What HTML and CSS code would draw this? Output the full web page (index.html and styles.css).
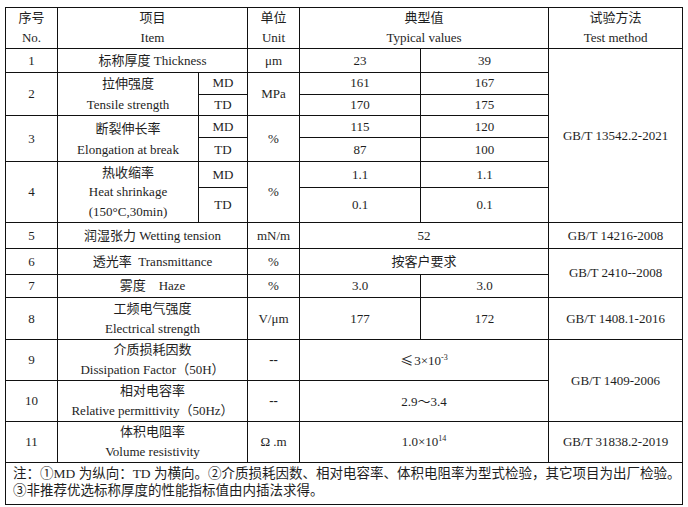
FILE: index.html
```html
<!DOCTYPE html>
<html lang="zh-CN">
<head>
<meta charset="utf-8">
<title>典型值</title>
<link rel="stylesheet" href="styles.css">
</head>
<body>
<table class="spec">
  <colgroup>
    <col class="c-no">
    <col class="c-item">
    <col class="c-dir">
    <col class="c-unit">
    <col class="c-v1">
    <col class="c-v2">
    <col class="c-test">
  </colgroup>
  <tbody>
    <tr class="r-head">
      <td>序号<br>No.</td>
      <td colspan="2">项目<br>Item</td>
      <td>单位<br>Unit</td>
      <td colspan="2">典型值<br>Typical values</td>
      <td>试验方法<br>Test method</td>
    </tr>
    <tr class="r1">
      <td>1</td>
      <td colspan="2">标称厚度 Thickness</td>
      <td>μm</td>
      <td>23</td>
      <td>39</td>
      <td rowspan="7">GB/T 13542.2-2021</td>
    </tr>
    <tr class="r2a">
      <td rowspan="2">2</td>
      <td rowspan="2" class="two">拉伸强度<br>Tensile strength</td>
      <td>MD</td>
      <td rowspan="2">MPa</td>
      <td>161</td>
      <td>167</td>
    </tr>
    <tr class="r2b">
      <td>TD</td>
      <td>170</td>
      <td>175</td>
    </tr>
    <tr class="r3a">
      <td rowspan="2">3</td>
      <td rowspan="2" class="two">断裂伸长率<br>Elongation at break</td>
      <td>MD</td>
      <td rowspan="2">%</td>
      <td>115</td>
      <td>120</td>
    </tr>
    <tr class="r3b">
      <td>TD</td>
      <td>87</td>
      <td>100</td>
    </tr>
    <tr class="r4a">
      <td rowspan="2">4</td>
      <td rowspan="2" class="three">热收缩率<br>Heat shrinkage<br>(150°C,30min)</td>
      <td>MD</td>
      <td rowspan="2">%</td>
      <td>1.1</td>
      <td>1.1</td>
    </tr>
    <tr class="r4b">
      <td>TD</td>
      <td>0.1</td>
      <td>0.1</td>
    </tr>
    <tr class="r5">
      <td>5</td>
      <td colspan="2">润湿张力 Wetting tension</td>
      <td>mN/m</td>
      <td colspan="2">52</td>
      <td>GB/T 14216-2008</td>
    </tr>
    <tr class="r6">
      <td>6</td>
      <td colspan="2">透光率&nbsp; Transmittance</td>
      <td>%</td>
      <td colspan="2">按客户要求</td>
      <td rowspan="2">GB/T 2410--2008</td>
    </tr>
    <tr class="r7">
      <td>7</td>
      <td colspan="2">雾度&nbsp;&nbsp;&nbsp; Haze</td>
      <td>%</td>
      <td>3.0</td>
      <td>3.0</td>
    </tr>
    <tr class="r8">
      <td>8</td>
      <td colspan="2">工频电气强度<br>Electrical strength</td>
      <td>V/μm</td>
      <td>177</td>
      <td>172</td>
      <td>GB/T 1408.1-2016</td>
    </tr>
    <tr class="r9">
      <td>9</td>
      <td colspan="2">介质损耗因数<br>Dissipation Factor（50H）</td>
      <td class="dash">--</td>
      <td colspan="2"><span class="le">≤</span>3×10<sup>-3</sup></td>
      <td rowspan="2">GB/T 1409-2006</td>
    </tr>
    <tr class="r10">
      <td>10</td>
      <td colspan="2">相对电容率<br>Relative permittivity（50Hz）</td>
      <td class="dash">--</td>
      <td colspan="2">2.9<span class="tilde">～</span>3.4</td>
    </tr>
    <tr class="r11">
      <td>11</td>
      <td colspan="2">体积电阻率<br>Volume resistivity</td>
      <td>Ω .m</td>
      <td colspan="2">1.0×10<sup>14</sup></td>
      <td>GB/T 31838.2-2019</td>
    </tr>
    <tr class="r-note">
      <td colspan="7" class="note">注：①MD 为纵向：TD 为横向。②介质损耗因数、相对电容率、体积电阻率为型式检验，其它项目为出厂检验。<br>③非推荐优选标称厚度的性能指标值由内插法求得。</td>
    </tr>
  </tbody>
</table>
</body>
</html>
```

FILE: styles.css
```css
html, body {
  background: #ffffff;
}
body {
  margin: 0;
  padding: 7px 0 0 5px;
  font-family: "Liberation Serif", "Noto Sans CJK SC", serif;
  font-size: 13px;
  color: #1e1e1e;
}
.spec {
  border-collapse: collapse;
  table-layout: fixed;
  width: 677px;
}
.spec td {
  border: 1px solid #111;
  padding: 0 2px;
  text-align: center;
  vertical-align: middle;
  line-height: 20px;
  white-space: nowrap;
}
.c-no { width: 52px; }
.c-item { width: 141px; }
.c-dir { width: 49px; }
.c-unit { width: 52px; }
.c-v1 { width: 121px; }
.c-v2 { width: 128px; }
.c-test { width: 134px; }

.r-head { height: 41px; }
.r1 { height: 24px; }
.r2a { height: 21px; }
.r2b { height: 21px; }
.r3a { height: 22px; }
.r3b { height: 24px; }
.r4a { height: 26px; }
.r4b { height: 35px; }
.r5 { height: 26px; }
.r6 { height: 26px; }
.r7 { height: 23px; }
.r8 { height: 42px; }
.r9 { height: 41px; }
.r10 { height: 41px; }
.r11 { height: 41px; }
.r-note { height: 42px; }

.spec td.two { line-height: 21px; }
.spec td.three { line-height: 19.5px; }
.spec td.dash { font-weight: bold; }
.spec sup {
  font-size: 8px;
  line-height: 0;
  vertical-align: 5px;
}
.le {
  font-family: "Noto Sans CJK SC", sans-serif;
  margin-right: 1px;
}
.tilde {
  font-family: "Noto Sans CJK SC", sans-serif;
}
.spec td.note {
  text-align: left;
  padding: 0 4px 4px 7px;
  font-size: 13.5px;
  line-height: 17px;
}
```
